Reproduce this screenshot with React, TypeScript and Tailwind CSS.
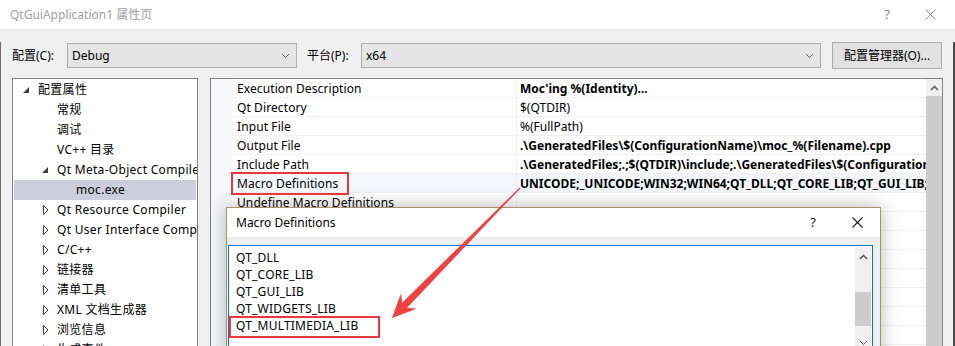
import React from "react";

const FONT = "font-['Noto_Sans','Noto_Sans_CJK_SC',sans-serif]";

interface TreeItem {
  label: string;
  level: number;
  icon?: "open" | "closed";
  selected?: boolean;
}

const TREE: TreeItem[] = [
  { label: "配置属性", level: 0, icon: "open" },
  { label: "常规", level: 1 },
  { label: "调试", level: 1 },
  { label: "VC++ 目录", level: 1 },
  { label: "Qt Meta-Object Compiler", level: 1, icon: "open" },
  { label: "moc.exe", level: 2, selected: true },
  { label: "Qt Resource Compiler", level: 1, icon: "closed" },
  { label: "Qt User Interface Compiler", level: 1, icon: "closed" },
  { label: "C/C++", level: 1, icon: "closed" },
  { label: "链接器", level: 1, icon: "closed" },
  { label: "清单工具", level: 1, icon: "closed" },
  { label: "XML 文档生成器", level: 1, icon: "closed" },
  { label: "浏览信息", level: 1, icon: "closed" },
  { label: "生成事件", level: 1, icon: "closed" },
];

interface Prop {
  name: string;
  value: string;
  bold?: boolean;
  active?: boolean;
}

const PROPS: Prop[] = [
  { name: "Execution Description", value: "Moc'ing %(Identity)...", bold: true },
  { name: "Qt Directory", value: "$(QTDIR)" },
  { name: "Input File", value: "%(FullPath)" },
  { name: "Output File", value: ".\\GeneratedFiles\\$(ConfigurationName)\\moc_%(Filename).cpp", bold: true },
  { name: "Include Path", value: ".\\GeneratedFiles;.;$(QTDIR)\\include;.\\GeneratedFiles\\$(ConfigurationName);$(QTDIR)\\include\\QtCore", bold: true },
  { name: "Macro Definitions", value: "UNICODE;_UNICODE;WIN32;WIN64;QT_DLL;QT_CORE_LIB;QT_GUI_LIB;QT_WIDGETS_LIB;QT_MULTIMEDIA_LIB", bold: true, active: true },
  { name: "Undefine Macro Definitions", value: "" },
  { name: "", value: "" },
  { name: "", value: "" },
  { name: "", value: "" },
  { name: "", value: "" },
  { name: "", value: "" },
  { name: "", value: "" },
  { name: "", value: "" },
];

const MACROS = ["QT_DLL", "QT_CORE_LIB", "QT_GUI_LIB", "QT_WIDGETS_LIB", "QT_MULTIMEDIA_LIB"];

function Chevron({ up = false, color = "#606060" }: { up?: boolean; color?: string }) {
  return (
    <svg width="9" height="6" viewBox="0 0 9 6">
      <polyline
        points={up ? "1,5 4.5,1.5 8,5" : "1,1 4.5,4.5 8,1"}
        fill="none"
        stroke={color}
        strokeWidth={up ? 1.6 : 1}
      />
    </svg>
  );
}

function TreeToggle({ icon }: { icon?: "open" | "closed" }) {
  if (icon === "open")
    return (
      <svg width="7" height="7" viewBox="0 0 7 7" className="mt-[1px]">
        <polygon points="6,0 6,6 0,6" fill="#404040" />
      </svg>
    );
  if (icon === "closed")
    return (
      <svg width="6" height="10" viewBox="0 0 6 10" className="ml-[1px]">
        <polygon points="0.5,0.5 5,5 0.5,9.5" fill="none" stroke="#404040" strokeWidth="1" />
      </svg>
    );
  return null;
}

function Combo({ value, width }: { value: string; width: string }) {
  return (
    <div className={`${width} h-[25px] flex items-center justify-between bg-[#e5e5e5] border border-[#adadad] pl-[4px] pr-[6px]`}>
      <span className="text-[12px] text-black">{value}</span>
      <Chevron />
    </div>
  );
}

export default function App() {
  return (
    <div className={`w-[955px] h-[346px] overflow-hidden relative bg-[#f0f0f0] text-black ${FONT}`}>
      {/* Title bar */}
      <div className="h-[29px] bg-white flex items-center justify-between pl-[10px]">
        <span className="text-[12px] text-[#a0a0a0]">QtGuiApplication1 属性页</span>
        <div className="flex items-center">
          <span className="text-[13px] text-[#8a8a8a] w-[20px] text-center mr-[28px]">?</span>
          <svg width="11" height="11" viewBox="0 0 11 11" className="mr-[19px]">
            <path d="M0.5 0.5 L10.5 10.5 M10.5 0.5 L0.5 10.5" stroke="#8a8a8a" strokeWidth="1" />
          </svg>
        </div>
      </div>

      {/* Body */}
      <div className="h-[317px] border-l border-[#6e6e6e] border-r-2 border-r-[#4a4a4a] pl-[11px]">
        {/* Toolbar */}
        <div className="mt-[13px] h-[27px] flex items-center">
          <span className="w-[55px] text-[12px]">配置(C):</span>
          <Combo value="Debug" width="w-[230px]" />
          <span className="w-[54px] ml-[10px] text-[12px]">平台(P):</span>
          <Combo value="x64" width="w-[460px]" />
          <div className="ml-[11px] w-[110px] h-[27px] bg-[#e1e1e1] border border-[#adadad] flex items-center justify-center text-[12px]">
            配置管理器(O)...
          </div>
        </div>

        {/* Content */}
        <div className="mt-[9px] flex gap-[12px] h-[300px]">
          {/* Tree */}
          <div className="w-[186px] border border-[#828282] bg-white p-[1px] overflow-hidden">
            {TREE.map((item) => (
              <div
                key={item.label}
                className={`h-[20px] flex items-center whitespace-nowrap text-[12px] tracking-[0.3px] ${item.selected ? "bg-[#cccedb]" : ""}`}
                style={{ paddingLeft: 9 + item.level * 19 }}
              >
                <span className="w-[15px] shrink-0 flex items-center">
                  <TreeToggle icon={item.icon} />
                </span>
                <span>{item.label}</span>
              </div>
            ))}
          </div>

          {/* Property grid */}
          <div className="w-[733px] border border-[#828282] bg-white flex">
            <div className="w-[21px] bg-[#f5f6f8]" />
            <div className="flex-1 overflow-hidden">
              {PROPS.map((p, i) => (
                <div
                  key={i}
                  className={`h-[19px] flex border-b border-[#f0f0f0] text-[12px] whitespace-nowrap ${p.active ? "bg-[#f3f6fb]" : ""}`}
                >
                  <div className="w-[285px] pl-[5px] pt-[2px] border-r border-[#f0f0f0] flex items-center tracking-[0.1px]">
                    {p.name}
                  </div>
                  <div className={`flex-1 pl-[3px] pt-[2px] flex items-center overflow-hidden ${p.bold ? "font-bold" : ""}`}>
                    {p.value}
                  </div>
                </div>
              ))}
            </div>
            <div className="w-[16px] bg-[#f0f0f0] flex flex-col">
              <div className="h-[17px] flex items-center justify-center">
                <Chevron up />
              </div>
              <div className="flex-1 bg-[#cdcdcd]" />
            </div>
          </div>
        </div>
      </div>

      {/* Macro Definitions dialog */}
      <div className="absolute left-[226px] top-[207px] w-[655px] h-[150px] border border-[#a3946b] bg-[#f0f0f0] shadow-[0_0_18px_rgba(0,0,0,0.28)]">
        <div className="h-[29px] bg-white flex items-center justify-between pl-[9px]">
          <span className="text-[12px]">Macro Definitions</span>
          <div className="flex items-center">
            <span className="text-[13px] text-[#202020] w-[14px] text-center mr-[32px]">?</span>
            <svg width="11" height="11" viewBox="0 0 11 11" className="mr-[17px]">
              <path d="M0.5 0.5 L10.5 10.5 M10.5 0.5 L0.5 10.5" stroke="#202020" strokeWidth="1.1" />
            </svg>
          </div>
        </div>
        <div className="pt-[8px] pl-[1px] pr-[7px]">
          <div className="h-[120px] border border-[#0078d7] bg-white flex">
            <div className="flex-1 pt-[3px] pl-[7px]">
              {MACROS.map((m) => (
                <div key={m} className="h-[17px] flex items-center text-[12px] tracking-[0.2px]">
                  {m}
                </div>
              ))}
            </div>
            <div className="w-[16px] mt-[1px] mr-[1px] bg-[#f0f0f0] flex flex-col">
              <div className="h-[19px] flex items-center justify-center">
                <Chevron up />
              </div>
              <div className="h-[26px]" />
              <div className="h-[34px] bg-[#cdcdcd]" />
              <div className="h-[7px]" />
              <div className="h-[19px] flex items-center justify-center">
                <Chevron up={false} color="#606060" />
              </div>
            </div>
          </div>
        </div>
      </div>

      {/* Annotations */}
      <div className="absolute left-[231px] top-[172px] w-[118px] h-[23px] border-2 border-[#e8383d]" />
      <div className="absolute left-[229px] top-[316px] w-[151px] h-[22px] border-2 border-[#e8383d]" />
      <svg className="absolute left-0 top-0" width="955" height="346" viewBox="0 0 955 346">
        <polygon
          points="520.4,188.4 407.1,307.7 416.6,308.7 392,318 401,293.3 402.1,302.7 519.6,187.6"
          fill="#f04040"
        />
      </svg>
    </div>
  );
}
